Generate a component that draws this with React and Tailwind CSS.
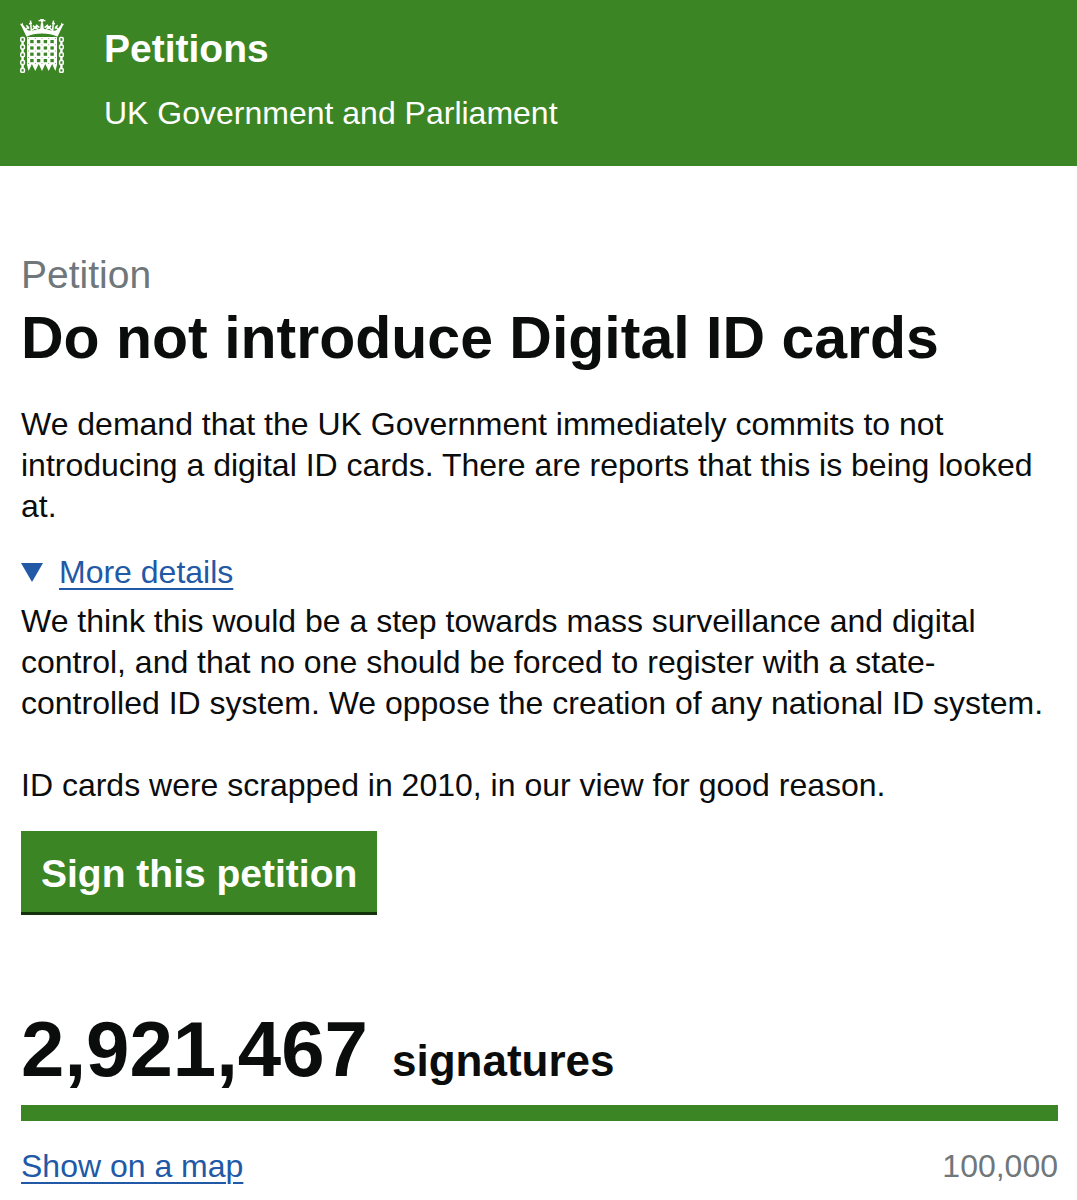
import React from "react";

const GOAL = 100000;
const SIGNATURES = 2921467;

const LINK_ROWS = [18.6, 26, 33.8, 41.6, 49.4];
const HOLE_COLS = [10.2, 16.9, 23.7, 30.4];
const HOLE_ROWS = [21, 27.4, 33.6, 40];

function HalfCrown() {
  return (
    <g>
      <path d="M6.5 17.8 L1.6 7.6 L0 4.8 L1.4 5 L2.4 3.4 L3.2 6 L6.6 10.6 L8.6 11.4 L10.8 11.8 L15 11 L18.4 10.2 L20.2 9.8 L21 3.5 H22 V14.6 C16 14.6 11 15.6 6.5 17.8 Z" />
      <path
        d="M5.4 10.8 L8.8 7.6 M6.4 6.2 L9 9.6 M10.5 1.6 L11.4 12.5 M9 4.8 L12 4.4 M12.2 11 L16 7.4 M13 6.6 L16 9.6 M16 7.4 L17.8 11.5 M16 5.8 L19.4 8.6"
        className="stroke-white stroke-[1.5]"
      />
      <path d="M18.6 0.8 L20.4 1.2 L20 0 H22 V3.4 H21 L20.6 2 L18.6 2.6 Z" />
    </g>
  );
}

function Portcullis() {
  return (
    <svg viewBox="0 0 44 54" className="h-[54px] w-11 shrink-0 fill-white" aria-hidden="true">
      <HalfCrown />
      <g transform="matrix(-1 0 0 1 44 0)">
        <HalfCrown />
      </g>
      {/* gate */}
      <path d="M7 18 H37 V46 L35.4 52 L32.1 45 L28.7 52 L25.3 45 L22 52 L18.7 45 L15.3 52 L11.9 45 L8.6 52 L7 46 Z" />
      <g className="fill-[#3b8524]">
        {HOLE_ROWS.map((y) => HOLE_COLS.map((x) => <rect key={`${x}-${y}`} x={x} y={y} width="3.4" height="3.2" />))}
        {[19, 25.4, 31.6, 38, 44].map((y) =>
          [8.2, 14.9, 21.6, 28.4, 35].map((x) => <rect key={`${x}-${y}`} x={x} y={y} width="0.8" height="0.8" />)
        )}
      </g>
      {/* chains */}
      <g className="fill-none stroke-white stroke-[1.5]">
        {[2.6, 41.4].map((cx) => (
          <g key={cx}>
            {LINK_ROWS.map((y) => (
              <rect key={y} x={cx - 1.8} y={y} width="3.6" height="3.9" rx="1" />
            ))}
            {LINK_ROWS.slice(1).map((y) => (
              <path key={y} d={`M${cx} ${y - 3.8} V${y}`} className="stroke-[2.4]" />
            ))}
          </g>
        ))}
      </g>
    </svg>
  );
}

export default function App() {
  return (
    <div className="min-h-screen bg-white text-[#0b0c0c] text-[32px] leading-[41px] font-['Liberation_Sans',Arial,sans-serif]">
      <header className="flex items-start gap-10 bg-[#3b8524] px-5 pt-[19px] pb-8 text-white">
        <Portcullis />
        <div>
          <a href="#petitions" className="block pt-1 text-[39px] leading-[52px] font-bold">
            Petitions
          </a>
          <p className="pt-[18px]">UK Government and Parliament</p>
        </div>
      </header>

      <main className="pr-[19px] pl-[21px] pt-[84px] pb-3">
        <h1>
          <span className="block text-[39px] leading-[50px] text-[#6f777b]">Petition</span>
          <span className="block text-[59px] leading-[76px] font-bold">Do not introduce Digital ID cards</span>
        </h1>
        <p className="mt-7">
          We demand that the UK Government immediately commits to not introducing a digital ID cards. There are reports
          that this is being looked at.
        </p>

        <details open className="mt-[25px]">
          <summary className="flex w-fit cursor-pointer list-none items-center gap-4 text-[#2159a6]">
            <svg viewBox="0 0 22 19" className="h-[19px] w-[22px] fill-current" aria-hidden="true">
              <path d="M0 0 H22 L11 19 Z" />
            </svg>
            <span className="underline decoration-2 underline-offset-[5px]">More details</span>
          </summary>
          <div className="mt-2">
            <p>
              We think this would be a step towards mass surveillance and digital control, and that no one should be
              forced to register with a state-controlled ID system. We oppose the creation of any national ID system.
            </p>
            <p className="mt-[41px]">ID cards were scrapped in 2010, in our view for good reason.</p>
          </div>
        </details>

        <button
          type="button"
          className="mt-[25px] cursor-pointer border-b-3 border-[#14320c] bg-[#3b8524] px-5 pt-[18px] pb-[13px] text-[39px] leading-[50px] font-bold text-white"
        >
          Sign this petition
        </button>

        <p className="mt-[84px] flex items-baseline gap-6 font-bold">
          <span className="text-[78px] leading-[100px]">{SIGNATURES.toLocaleString("en-GB")}</span>
          <span className="text-[44px]">signatures</span>
        </p>
        <div className="mt-[6px] h-4 bg-[#d9dcdd]">
          <div className="h-full bg-[#3b8524]" style={{ width: `${Math.min(100, (SIGNATURES / GOAL) * 100)}%` }} />
        </div>
        <div className="mt-[25px] flex justify-between">
          <a href="#map" className="text-[#2159a6] underline decoration-2 underline-offset-[5px]">
            Show on a map
          </a>
          <span className="text-[#6f777b]">{GOAL.toLocaleString("en-GB")}</span>
        </div>
      </main>
    </div>
  );
}
